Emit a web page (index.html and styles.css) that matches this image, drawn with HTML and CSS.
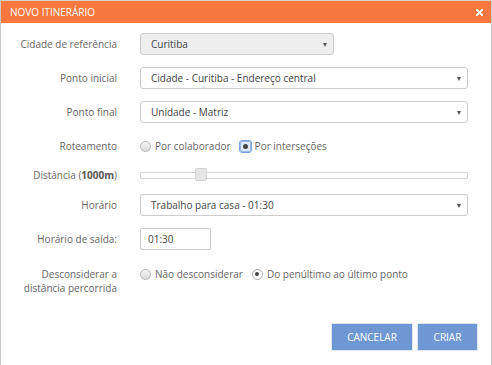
FILE: index.html
```html
<!DOCTYPE html>
<html lang="pt">
<head>
<meta charset="utf-8">
<link rel="stylesheet" href="styles.css">
</head>
<body>
<div class="dialog">
  <div class="header">
    <span class="title">NOVO ITINERÁRIO</span>
    <span class="close">
      <svg width="7" height="7" viewBox="0 0 7 7"><path d="M1 1L6 6M6 1L1 6" stroke="#fff" stroke-width="2" stroke-linecap="square"/></svg>
    </span>
  </div>
  <div class="form">
    <div class="row">
      <div class="label">Cidade de referência</div>
      <div class="select disabled short"><span>Curitiba</span><i class="arrow"></i></div>
    </div>
    <div class="row">
      <div class="label">Ponto inicial</div>
      <div class="select"><span>Cidade - Curitiba - Endereço central</span><i class="arrow"></i></div>
    </div>
    <div class="row">
      <div class="label">Ponto final</div>
      <div class="select"><span>Unidade - Matriz</span><i class="arrow"></i></div>
    </div>
    <div class="row">
      <div class="label">Roteamento</div>
      <div class="radios">
        <label class="radio"><i class="dot"></i>Por colaborador</label>
        <label class="radio"><i class="dot checked focus"></i>Por interseções</label>
      </div>
    </div>
    <div class="row slim">
      <div class="label">Distância (<b>1000m</b>)</div>
      <div class="slider"><div class="track"></div><div class="thumb"></div></div>
    </div>
    <div class="row">
      <div class="label">Horário</div>
      <div class="select"><span>Trabalho para casa - 01:30</span><i class="arrow"></i></div>
    </div>
    <div class="row">
      <div class="label">Horário de saída:</div>
      <div class="input">01:30</div>
    </div>
    <div class="row top">
      <div class="label">Desconsiderar a<br>distância percorrida</div>
      <div class="radios">
        <label class="radio"><i class="dot"></i>Não desconsiderar</label>
        <label class="radio"><i class="dot checked"></i>Do penúltimo ao último ponto</label>
      </div>
    </div>
    <div class="actions">
      <button class="btn cancel">CANCELAR</button>
      <button class="btn">CRIAR</button>
    </div>
  </div>
</div>
</body>
</html>
```
FILE: styles.css
```css
html, body {
  margin: 0;
  padding: 0;
  background: #fff;
}
body {
  font-family: "Open Sans", "Liberation Sans", sans-serif;
  font-size: 10px;
  color: #666;
}
.dialog {
  width: 490px;
  height: 364px;
  border-left: 1px solid #c8c8c8;
  border-right: 1px solid #c8c8c8;
  border-top: 1px solid #d8d2c8;
  box-sizing: content-box;
}
.header {
  height: 22px;
  background: #f8773e;
  display: flex;
  align-items: center;
  justify-content: space-between;
  padding: 0 8px 0 9px;
}
.title {
  color: #fff;
  font-size: 10px;
}
.close {
  display: flex;
  align-items: center;
}
.form {
  padding-top: 10px;
}
.row {
  display: flex;
  align-items: center;
  min-height: 22px;
  margin-bottom: 12px;
}
.row.slim {
  min-height: 14px;
  margin-top: -1px;
  margin-bottom: 12px;
}
.row.top {
  align-items: flex-start;
  margin-top: 17px;
}
.label {
  width: 116px;
  text-align: right;
  margin-right: 23px;
  line-height: 14px;
  flex: none;
}
.label b {
  font-weight: 700;
  color: #555;
}
.select {
  width: 328px;
  height: 22px;
  box-sizing: border-box;
  border: 1px solid #ccc;
  border-radius: 3px;
  background: #fff;
  display: flex;
  align-items: center;
  justify-content: space-between;
  padding: 0 6px 0 10px;
  color: #444;
}
.select.short {
  width: 194px;
}
.select.disabled {
  background: #eee;
}
.arrow {
  width: 0;
  height: 0;
  border-left: 2.5px solid transparent;
  border-right: 2.5px solid transparent;
  border-top: 4px solid #555;
  margin-top: 1px;
}
.radios {
  display: flex;
  align-items: center;
  line-height: 14px;
}
.radio {
  display: flex;
  align-items: center;
  margin-right: 9px;
}
.dot {
  width: 9px;
  height: 9px;
  border-radius: 50%;
  border: 1px solid #b5b5b5;
  background: linear-gradient(#f4f4f4, #dcdcdc);
  margin-right: 4px;
  position: relative;
  box-sizing: content-box;
}
.dot.checked {
  background: #fff;
  border-color: #aaa;
}
.dot.checked::after {
  content: "";
  position: absolute;
  left: 2.5px;
  top: 2.5px;
  width: 4px;
  height: 4px;
  border-radius: 50%;
  background: #444;
}
.dot.focus {
  outline: 1px solid #7aa3dd;
  outline-offset: 0;
  border-radius: 2px;
  border-color: #9bb8e4;
  background: #dde8f7;
}
.dot.focus::after {
  width: 5px;
  height: 5px;
  left: 2px;
  top: 2px;
}
.slider {
  width: 328px;
  height: 14px;
  position: relative;
  display: flex;
  align-items: center;
}
.track {
  width: 100%;
  height: 7px;
  box-sizing: border-box;
  border: 1px solid #d3d3d3;
  border-radius: 2px;
  background: #fff;
}
.thumb {
  position: absolute;
  left: 55px;
  top: 0;
  width: 12px;
  height: 13px;
  box-sizing: border-box;
  background: #e6e6e6;
  border: 1px solid #d3d3d3;
  border-radius: 2px;
}
.input {
  width: 71px;
  height: 22px;
  box-sizing: border-box;
  border: 1px solid #ccc;
  border-radius: 2px;
  padding: 0 7px;
  display: flex;
  align-items: center;
  color: #444;
}
.actions {
  display: flex;
  justify-content: flex-end;
  gap: 4px;
  padding-right: 13px;
  margin-top: 28px;
}
.btn {
  font-family: "Open Sans", "Liberation Sans", sans-serif;
  font-size: 10px;
  color: #fff;
  background: #6f97d3;
  border: 1px solid #e0e6ee;
  height: 28px;
  width: 61px;
  padding: 0;
}
.btn.cancel {
  width: 82px;
}
```
